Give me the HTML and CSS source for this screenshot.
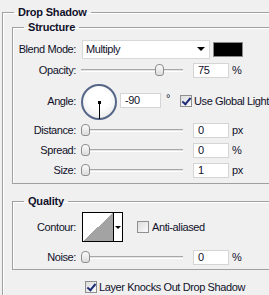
FILE: index.html
```html
<!DOCTYPE html>
<html lang="en">
<head>
    <meta charset="UTF-8">
    <title>Drop Shadow</title>
    <link rel="stylesheet" href="styles.css">
</head>
<body>
    <fieldset class="group outer">
        <legend>Drop Shadow</legend>

        <fieldset class="group inner structure">
            <legend>Structure</legend>

            <div class="row row-blend">
                <span class="lbl">Blend Mode:</span>
                <div class="select">
                    <span>Multiply</span>
                    <span class="arrow"></span>
                </div>
                <div class="swatch"></div>
            </div>

            <div class="row row-opacity">
                <span class="lbl">Opacity:</span>
                <div class="slider"><span class="thumb" style="left: 74px"></span></div>
                <div class="field">75</div>
                <span class="unit">%</span>
            </div>

            <div class="row row-angle">
                <span class="lbl">Angle:</span>
                <div class="dial"><span class="hand"></span></div>
                <div class="field field-angle">-90</div>
                <span class="deg">°</span>
                <label class="check check-global">
                    <span class="box checked"></span>
                    Use Global Light
                </label>
            </div>

            <div class="row row-slider">
                <span class="lbl">Distance:</span>
                <div class="slider"><span class="thumb" style="left: 0px"></span></div>
                <div class="field">0</div>
                <span class="unit">px</span>
            </div>

            <div class="row row-slider">
                <span class="lbl">Spread:</span>
                <div class="slider"><span class="thumb" style="left: 0px"></span></div>
                <div class="field">0</div>
                <span class="unit">%</span>
            </div>

            <div class="row row-slider">
                <span class="lbl">Size:</span>
                <div class="slider"><span class="thumb" style="left: 0px"></span></div>
                <div class="field">1</div>
                <span class="unit">px</span>
            </div>
        </fieldset>

        <fieldset class="group inner quality">
            <legend>Quality</legend>

            <div class="row row-contour">
                <span class="lbl">Contour:</span>
                <div class="contour">
                    <span class="curve"></span>
                    <span class="drop"><span class="arrow"></span></span>
                </div>
                <label class="check check-anti">
                    <span class="box"></span>
                    Anti-aliased
                </label>
            </div>

            <div class="row row-slider row-noise">
                <span class="lbl">Noise:</span>
                <div class="slider"><span class="thumb" style="left: 0px"></span></div>
                <div class="field">0</div>
                <span class="unit">%</span>
            </div>
        </fieldset>

        <div class="row row-knock">
            <label class="check">
                <span class="box checked"></span>
                Layer Knocks Out Drop Shadow
            </label>
        </div>
    </fieldset>
</body>
</html>
```

FILE: styles.css
```css
body {
    margin: 0;
    background-color: #f0f0f0;
    font-family: "Liberation Sans", Arial, sans-serif;
    font-size: 11px;
    letter-spacing: -0.4px;
    color: #10102a;
    overflow: hidden;
}

/* etched group boxes */
.group {
    border: none;
    border-top: 1px solid #a0a0a0;
    border-left: 1px solid #a0a0a0;
    border-bottom: 1px solid #a0a0a0;
    box-shadow: inset 1px 1px 0 #fff;
    margin: 0;
    min-width: 0;
}

.group legend {
    font-weight: bold;
    line-height: 13px;
    padding: 0 4px;
    letter-spacing: -0.2px;
}

.outer {
    width: 330px;
    height: 320px;
    margin: 6px 0 0 2px;
    padding: 0 0 0 9px;
    border-bottom: none;
}

.outer > legend {
    margin-left: 2px;
}

.inner {
    padding: 0;
}

.inner > legend {
    margin-left: 11px;
}

.structure {
    margin-top: 2px;
    padding-bottom: 3px;
}

.quality {
    margin-top: 11px;
    padding-bottom: 2px;
}

/* rows */
.row {
    display: flex;
    align-items: center;
}

.lbl {
    width: 63px;
    flex-shrink: 0;
    text-align: right;
}

.row-blend {
    margin-top: 5px;
    height: 20px;
}

.row-opacity {
    margin-top: 3px;
    height: 16px;
}

.row-angle {
    margin-top: 6px;
    height: 36px;
}

.row-slider {
    height: 20px;
}

.row-contour {
    margin-top: 4px;
    height: 30px;
}

.row-noise {
    margin-top: 5px;
}

.row-knock {
    margin-top: 7px;
    height: 20px;
    padding-left: 73px;
}

/* blend mode select */
.select {
    margin-left: 6px;
    width: 128px;
    height: 19px;
    box-sizing: border-box;
    background-color: #fff;
    border: 1px solid #d8d8d8;
    display: flex;
    align-items: center;
    justify-content: space-between;
    padding: 0 4px 0 3px;
}

.arrow {
    width: 0;
    height: 0;
    border-left: 4px solid transparent;
    border-right: 4px solid transparent;
    border-top: 4px solid #000;
}

.swatch {
    margin-left: 3px;
    width: 30px;
    height: 15px;
    box-sizing: border-box;
    background-color: #000;
    border: 1px solid #8a8a8a;
}

/* sliders */
.slider {
    position: relative;
    margin-left: 5px;
    width: 102px;
    height: 3px;
    box-sizing: border-box;
    background-color: #e4e4e4;
    border-top: 1px solid #a8a8a8;
    border-bottom: 1px solid #fff;
}

.thumb {
    position: absolute;
    top: -6px;
    width: 9px;
    height: 12px;
    box-sizing: border-box;
    border: 1px solid #8e8e8e;
    border-radius: 4px 4px 3px 3px;
    background: linear-gradient(#fbfbfb, #dcdcdc);
}

.field {
    margin-left: 10px;
    width: 36px;
    height: 15px;
    box-sizing: border-box;
    background-color: #fff;
    border: 1px solid #d5d5d5;
    padding-left: 4px;
    line-height: 13px;
}

.unit {
    margin-left: 3px;
}

/* angle */
.dial {
    position: relative;
    margin-left: 5px;
    width: 36px;
    height: 36px;
    box-sizing: border-box;
    border: 2px solid #556688;
    border-radius: 50%;
    background: radial-gradient(circle at 50% 40%, #ffffff 40%, #e2e2e2 100%);
    flex-shrink: 0;
}

.dial::before {
    content: "";
    position: absolute;
    left: 15px;
    top: 15px;
    width: 3px;
    height: 3px;
    background-color: #000;
}

.hand {
    position: absolute;
    left: 16px;
    top: 16px;
    width: 1px;
    height: 17px;
    background-color: #000;
}

.field-angle {
    margin-left: 3px;
    width: 41px;
    margin-bottom: 3px;
}

.deg {
    margin-left: 5px;
    margin-bottom: 8px;
}

.row-angle .lbl,
.check-global {
    margin-bottom: 3px;
}

.check {
    display: flex;
    align-items: center;
    gap: 2px;
}

.check-global {
    margin-left: 10px;
    white-space: nowrap;
}

.box {
    position: relative;
    width: 12px;
    height: 12px;
    box-sizing: border-box;
    border: 1px solid #8f8f8f;
    background: linear-gradient(135deg, #dcdcdc, #fbfbfb);
    flex-shrink: 0;
}

.box.checked::after {
    content: "";
    position: absolute;
    left: 3px;
    top: 0;
    width: 3px;
    height: 7px;
    border-right: 2px solid #1e2d78;
    border-bottom: 2px solid #1e2d78;
    transform: rotate(40deg);
}

/* contour */
.contour {
    margin-left: 6px;
    width: 41px;
    height: 30px;
    box-sizing: border-box;
    border: 1px solid #000;
    display: flex;
}

.curve {
    width: 31px;
    background: linear-gradient(to top left, #a3a3a3 50%, #fff 50%);
}

.drop {
    width: 8px;
    border-left: 1px solid #000;
    background-color: #fff;
    display: flex;
    align-items: center;
    justify-content: center;
}

.drop .arrow {
    border-left-width: 3px;
    border-right-width: 3px;
    border-top-width: 3px;
}

.check-anti {
    margin-left: 14px;
    gap: 3px;
}
```
